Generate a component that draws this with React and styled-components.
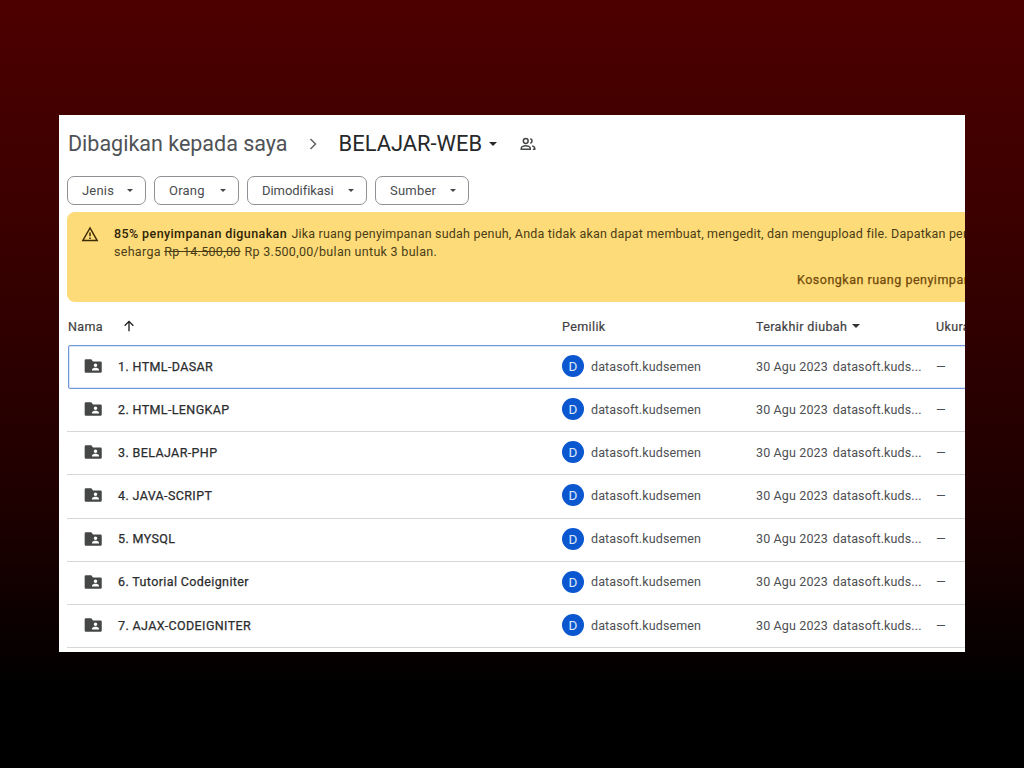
import React from "react";
import styled, { createGlobalStyle } from "styled-components";

const Global = createGlobalStyle`
  html, body { margin: 0; padding: 0; background: #000; }
  * { box-sizing: border-box; }
`;

const Page = styled.div`
  width: 1024px;
  height: 768px;
  padding: 115px 59px 116px 59px;
  background: linear-gradient(180deg, #4d0000 0%, #3a0000 30%, #1a0000 70%, #000 90%);
  font-family: Roboto, "Liberation Sans", sans-serif;
  overflow: hidden;
`;

const Panel = styled.main`
  width: 906px;
  height: 537px;
  background: #fff;
  overflow: hidden;
  padding: 0 0 0 8px;
`;

const Header = styled.header`
  display: flex;
  align-items: center;
  height: 61px;
  padding-bottom: 4px;
  white-space: nowrap;
`;

const Crumb = styled.span`
  font-size: 21.5px;
  color: #4f5256;
  margin-left: 1px;
`;

const Chevron = styled.svg`
  width: 20px;
  height: 20px;
  margin: 0 16px 0 15px;
  color: #5f6368;
`;

const Current = styled.span`
  font-size: 21.9px;
  color: #26282a;
`;

const Caret = styled.span`
  display: inline-block;
  width: 0;
  height: 0;
  flex: none;
  border-left: ${(p) => p.$size || 3.5}px solid transparent;
  border-right: ${(p) => p.$size || 3.5}px solid transparent;
  border-top: ${(p) => p.$size || 3.5}px solid ${(p) => p.$color || "#444746"};
`;

const TitleCaret = styled(Caret)`
  margin-left: 7px;
`;

const SharedIcon = styled.svg`
  width: 18px;
  height: 18px;
  margin-left: 22px;
  color: #444746;
`;

const Filters = styled.div`
  display: flex;
  gap: 8px;
  height: 29px;
`;

const Chip = styled.button`
  display: flex;
  align-items: center;
  justify-content: space-between;
  width: ${(p) => p.$w}px;
  height: 29px;
  padding: 0 12px 0 14px;
  background: #fff;
  border: 1px solid #8e9196;
  border-radius: 7px;
  font: 400 13px Roboto, sans-serif;
  letter-spacing: ${(p) => p.$spacing}px;
  color: #4a4c4e;
`;

const Banner = styled.section`
  width: 960px;
  height: 90px;
  margin-top: 7px;
  padding: 13px 0 0 14px;
  background: #fedb79;
  border-radius: 8px;
  position: relative;
  display: flex;
  gap: 15px;
`;

const WarnIcon = styled.svg`
  width: 18px;
  height: 18px;
  flex: none;
  color: #3c2a00;
`;

const BannerText = styled.p`
  margin: 0;
  font-size: 12.5px;
  line-height: 18px;
  color: #4a3d16;
  white-space: nowrap;
`;

const Strong = styled.strong`
  font-weight: 500;
  color: #2e2508;
  letter-spacing: 0.4px;
  margin-right: 1px;
`;

const Line = styled.span`
  display: block;
  letter-spacing: ${(p) => p.$spacing}px;
`;

const Struck = styled.s`
  margin-right: 4px;
`;

const BannerAction = styled.a`
  position: absolute;
  left: 730px;
  top: 60px;
  font-size: 12.5px;
  font-weight: 400;
  -webkit-text-stroke: 0.25px #704a0a;
  color: #704a0a;
  white-space: nowrap;
  letter-spacing: 0.5px;
`;

const Grid = styled.div`
  display: grid;
  grid-template-columns: 494px 194px 180px 120px;
  width: 988px;
  align-items: center;
`;

const HeadRow = styled(Grid)`
  height: 43px;
  padding: 5px 0 0 1px;
  font-size: 12.5px;
  font-weight: 400;
  -webkit-text-stroke: 0.2px #3f4143;
  color: #3f4143;
  letter-spacing: 0.38px;
`;

const NameHead = styled.div`
  display: flex;
  align-items: center;
  gap: 18px;
`;

const SortIcon = styled.svg`
  width: 16px;
  height: 16px;
  color: #1f1f1f;
`;

const ModHead = styled.div`
  display: flex;
  align-items: center;
  gap: 5px;
`;

const Row = styled(Grid)`
  height: ${(p) => (p.$selected ? 44 : 43.2)}px;
  padding: 0 0 2px 1px;
  font-size: 12.5px;
  color: #4d4f52;
  letter-spacing: 0.13px;
  border-bottom: 1px solid ${(p) => (p.$selected ? "#a5bfea" : "#d6d7d8")};
  ${(p) =>
    p.$selected &&
    `
    grid-template-columns: 493px 194px 180px 120px;
    margin-left: 1px;
    padding-left: 0;
    border: 1px solid #7097dc;
    box-shadow: inset 0 0 0 1px #dbe6f7;
    border-radius: 2px;
  `}
`;

const NameCell = styled.div`
  display: flex;
  align-items: center;
  padding-left: ${(p) => (p.$selected ? 14 : 15)}px;
  font-weight: 400;
  -webkit-text-stroke: 0.25px #2b2c2e;
  color: #2b2c2e;
  letter-spacing: 0.38px;
  gap: 15px;
`;

const FolderIcon = styled.svg`
  width: 20px;
  height: 20px;
  flex: none;
  color: #444746;
`;

const OwnerCell = styled.div`
  display: flex;
  align-items: center;
  gap: 7px;
`;

const Avatar = styled.span`
  display: flex;
  align-items: center;
  justify-content: center;
  width: 22px;
  height: 22px;
  border-radius: 50%;
  background: #0b57d0;
  color: #dce7f9;
  font-size: 13.5px;
`;

const DateCell = styled.div`
  display: flex;
  gap: 5px;
  white-space: nowrap;
`;

const Folder = () => (
  <FolderIcon viewBox="0 0 24 24">
    <path
      fill="currentColor"
      fillRule="evenodd"
      d="M3.500 4h6.500l2 2.500h9a1.500 1.500 0 0 1 1.500 1.500v10.500a1.500 1.500 0 0 1-1.500 1.500h-17.500a1.500 1.500 0 0 1-1.500-1.500v-13a1.500 1.500 0 0 1 1.500-1.500zM15 9a2.100 2.100 0 1 0 0 4.200 2.100 2.100 0 0 0 0-4.200zM10.800 17.500h8.400v-1c0-1.500-2.800-2.300-4.200-2.300s-4.200 .8-4.200 2.300z"
    />
  </FolderIcon>
);

const folders = [
  "1. HTML-DASAR",
  "2. HTML-LENGKAP",
  "3. BELAJAR-PHP",
  "4. JAVA-SCRIPT",
  "5. MYSQL",
  "6. Tutorial Codeigniter",
  "7. AJAX-CODEIGNITER",
];

const chips = [
  ["Jenis", 79, 0.2],
  ["Orang", 85, 0.2],
  ["Dimodifikasi", 120, -0.05],
  ["Sumber", 94, 0.2],
];

export default function App() {
  return (
    <Page>
      <Global />
      <Panel>
        <Header>
          <Crumb>Dibagikan kepada saya</Crumb>
          <Chevron viewBox="0 0 24 24" fill="none" stroke="currentColor" strokeWidth="1.800">
            <path d="M9 6l6 6-6 6" />
          </Chevron>
          <Current>BELAJAR-WEB</Current>
          <TitleCaret $size={4.5} $color="#26282a" />
          <SharedIcon viewBox="0 0 24 24" fill="none" stroke="currentColor" strokeWidth="2">
            <circle cx="9" cy="8" r="3.200" />
            <path d="M3 19v-1.500c0-2 3.500-3.200 6-3.200s6 1.200 6 3.200V19z" />
            <path d="M15 4.900a3.200 3.200 0 0 1 0 6.200M17.500 14.500c2 .5 3.500 1.500 3.500 3V19h-2.500" />
          </SharedIcon>
        </Header>
        <Filters>
          {chips.map(([label, w, spacing]) => (
            <Chip key={label} $w={w} $spacing={spacing}>
              {label}
              <Caret />
            </Chip>
          ))}
        </Filters>
        <Banner>
          <WarnIcon viewBox="0 0 24 24" fill="none" stroke="currentColor" strokeWidth="2">
            <path d="M12 4L2.500 20.500h19z" strokeLinejoin="miter" />
            <path d="M12 10v5M12 16.500v2" />
          </WarnIcon>
          <BannerText>
            <Line $spacing={0.2}>
              <Strong>85% penyimpanan digunakan</Strong> Jika ruang penyimpanan sudah penuh, Anda tidak akan dapat
              membuat, mengedit, dan mengupload file. Dapatkan penyimpanan
            </Line>
            <Line $spacing={0.3}>
              seharga <Struck>Rp 14.500,00</Struck>Rp 3.500,00/bulan untuk 3 bulan.
            </Line>
          </BannerText>
          <BannerAction>Kosongkan ruang penyimpanan</BannerAction>
        </Banner>
        <HeadRow>
          <NameHead>
            Nama
            <SortIcon viewBox="0 0 24 24" fill="none" stroke="currentColor" strokeWidth="2">
              <path d="M12 20V5M5.500 11.500L12 5l6.500 6.500" />
            </SortIcon>
          </NameHead>
          <div>Pemilik</div>
          <ModHead>
            Terakhir diubah
            <Caret $size={4.5} $color="#333" />
          </ModHead>
          <div>Ukuran</div>
        </HeadRow>
        {folders.map((name, i) => (
          <Row key={name} $selected={i === 0}>
            <NameCell $selected={i === 0}>
              <Folder />
              {name}
            </NameCell>
            <OwnerCell>
              <Avatar>D</Avatar>
              datasoft.kudsemen
            </OwnerCell>
            <DateCell>
              <span>30 Agu 2023</span>
              <span>datasoft.kuds...</span>
            </DateCell>
            <div>—</div>
          </Row>
        ))}
      </Panel>
    </Page>
  );
}
